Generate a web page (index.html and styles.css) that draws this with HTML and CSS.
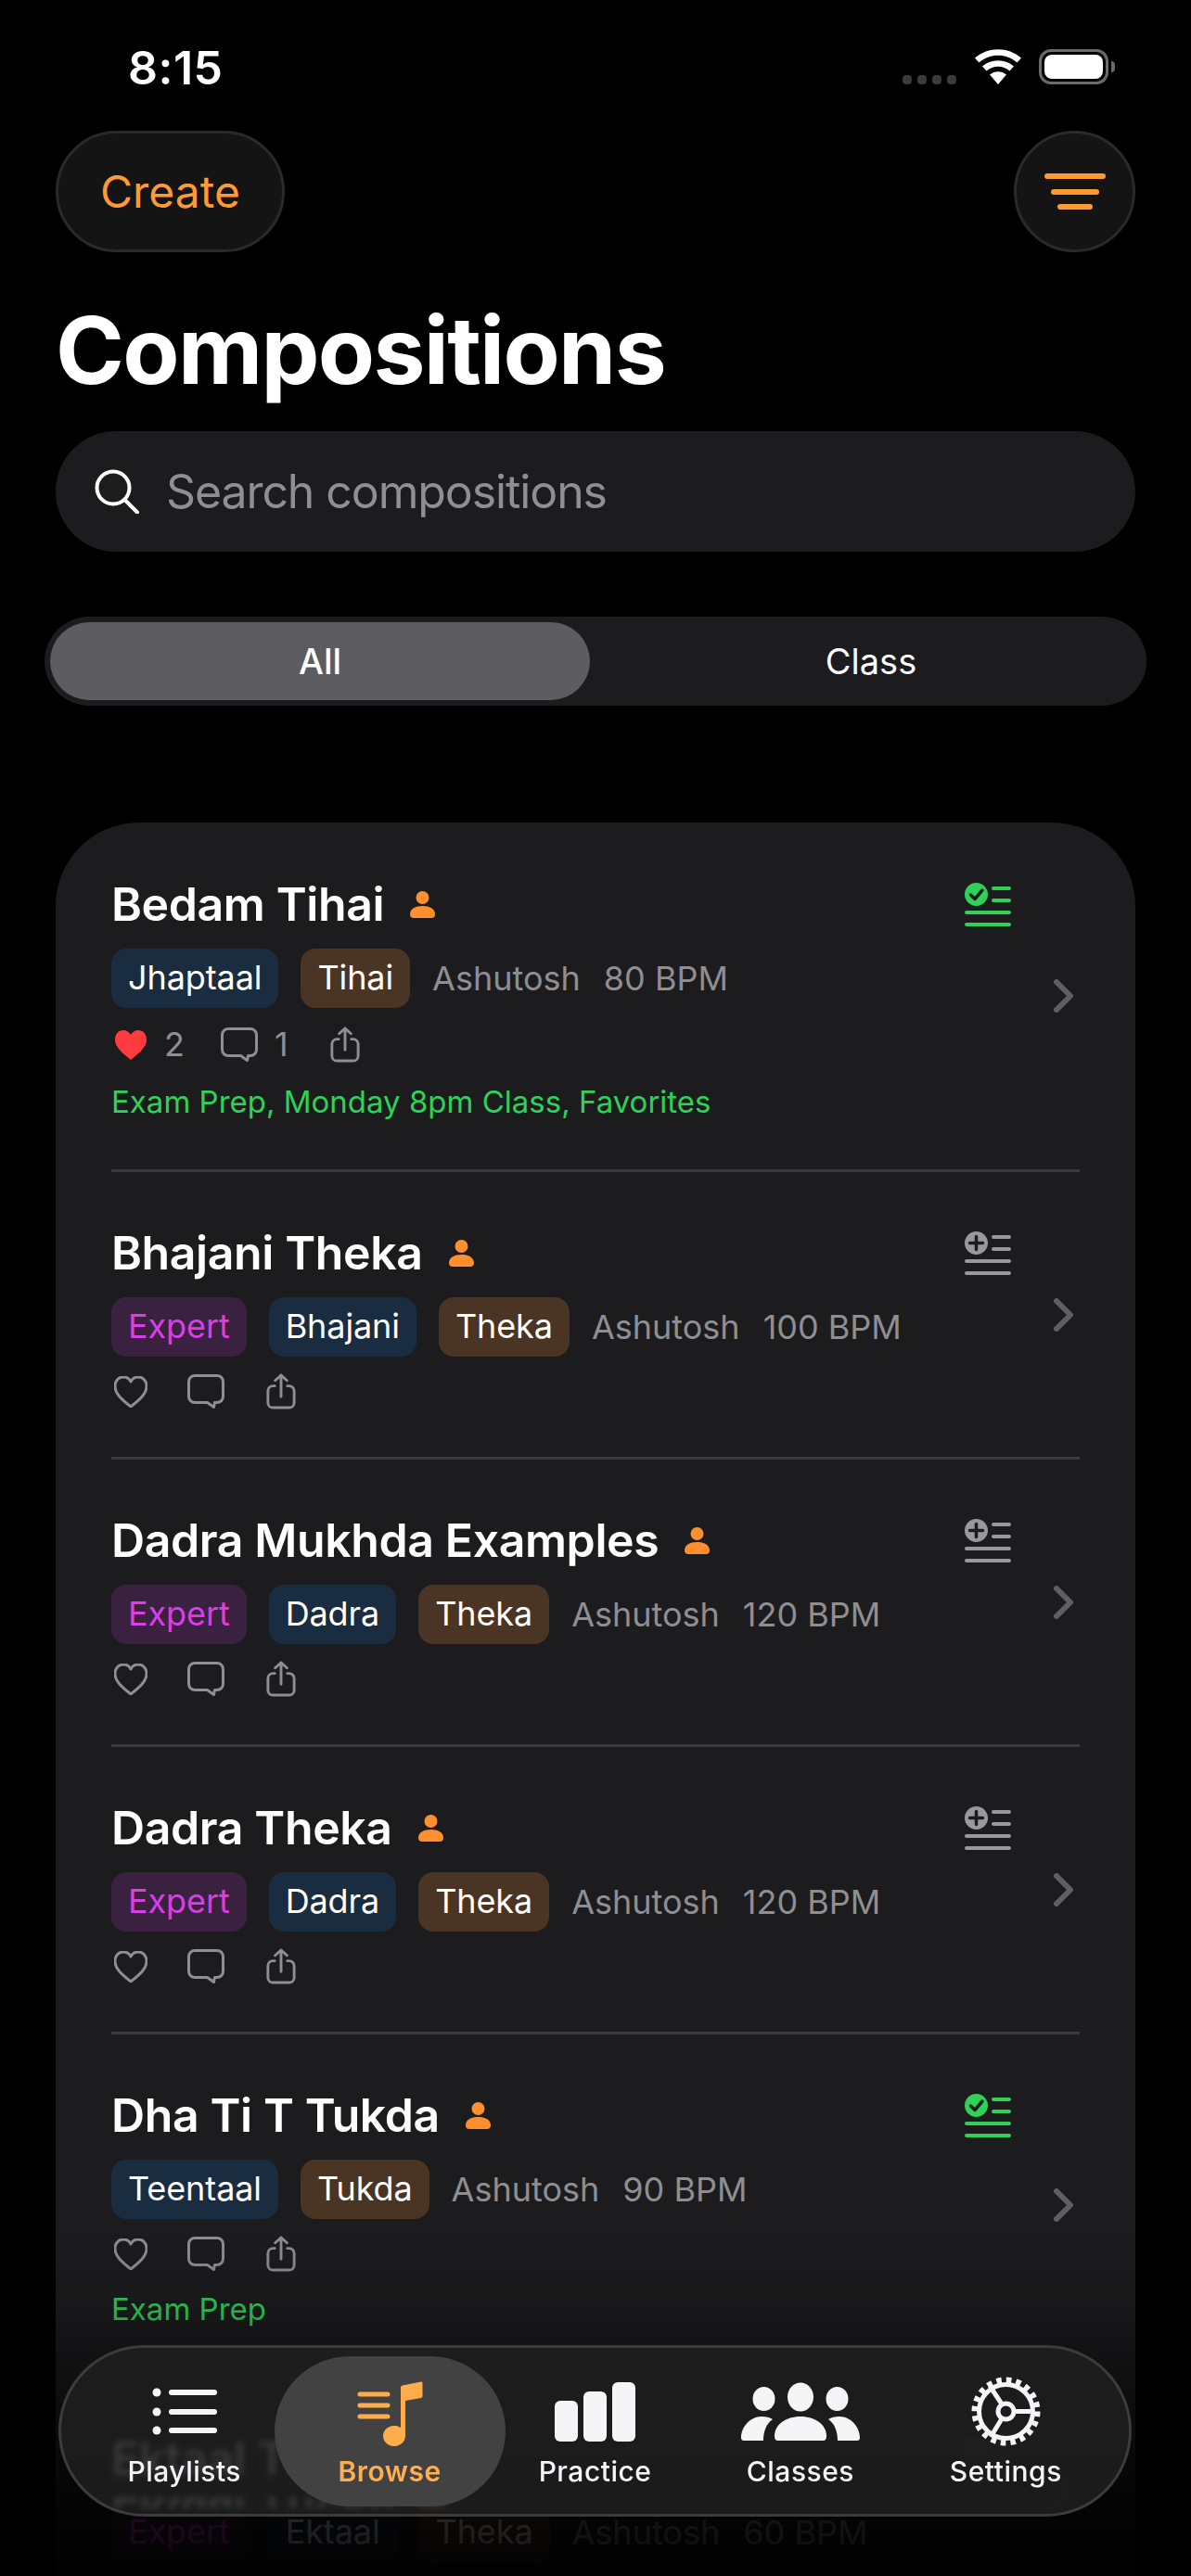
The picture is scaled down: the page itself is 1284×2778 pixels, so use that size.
FILE: index.html
```html
<!DOCTYPE html>
<html lang="en">
  <head>
    <meta charset="UTF-8" />
    <meta name="viewport" content="width=device-width, initial-scale=1.0" />
    <title>Compositions</title>
    <link rel="stylesheet" href="styles.css">
  </head>

  <body>
    <!-- shared icons -->
    <svg class="sprite">
      <symbol id="person" viewBox="0 0 27 29">
        <circle cx="13.5" cy="7" r="7" />
        <path d="M0 25c0-6 6-9 13.5-9S27 19 27 25c0 3-2 4-4 4H4c-2 0-4-1-4-4z" />
      </symbol>
      <symbol id="heart" viewBox="0 0 36 34">
        <path d="M18 33C8 25 1 19 1 11 1 5 5 1 10 1c3.500 0 6.500 2 8 5 1.500-3 4.500-5 8-5 5 0 9 4 9 10 0 8-7 14-17 22z" />
      </symbol>
      <symbol id="comment" viewBox="0 0 40 38">
        <path d="M8 1.500h24a6.500 6.500 0 0 1 6.500 6.500v16a6.500 6.500 0 0 1-6.500 6.500h-2.500l-1 5-7-5H8A6.500 6.500 0 0 1 1.500 24V8A6.500 6.500 0 0 1 8 1.500z" />
      </symbol>
      <symbol id="share" viewBox="0 0 32 40">
        <path d="M9 14H7a5.500 5.500 0 0 0-5.500 5.500v13A5.500 5.500 0 0 0 7 38h18a5.500 5.500 0 0 0 5.500-5.500v-13A5.500 5.500 0 0 0 25 14h-2" />
        <path d="M16 26V2M9.500 8 16 2l6.500 6" />
      </symbol>
      <symbol id="added" viewBox="0 0 50 48">
        <circle class="fill" cx="12.500" cy="12.500" r="12.500" />
        <path class="mark" d="M6.500 13l4.500 4.500 8-9.500" />
        <path class="lines" d="M31 6h17M31 19h17M2 32h46M2 45h46" />
      </symbol>
      <symbol id="add" viewBox="0 0 50 48">
        <circle class="fill" cx="12.500" cy="12.500" r="12.500" />
        <path class="mark" d="M12.500 5.500v14M5.500 12.500h14" />
        <path class="lines" d="M31 6h17M31 19h17M2 32h46M2 45h46" />
      </symbol>
      <symbol id="chevron" viewBox="0 0 22 36">
        <path d="M3 3l15 15L3 33" />
      </symbol>
    </svg>

    <div class="screen">
      <div class="status">
        <span class="time">8:15</span>
        <div class="status-icons">
          <div class="dots"><i></i><i></i><i></i><i></i></div>
          <svg class="wifi" viewBox="0 0 50 38">
            <path d="M25 38 16 27.500c5-4.500 13-4.500 18 0z" />
            <path d="M12.500 23.500 8 18.500c9.500-8.500 24.500-8.500 34 0l-4.500 5c-7-6.500-18-6.500-25 0z" />
            <path d="M4.500 14.500 0 9.500c14-12.500 36-12.500 50 0l-4.500 5c-11.500-10.500-29.500-10.500-41 0z" />
          </svg>
          <div class="battery"><i></i></div>
        </div>
      </div>

      <div class="top">
        <button class="create">Create</button>
        <button class="filter">
          <svg viewBox="0 0 66 40">
            <path d="M3 3h60M10 20h46M17 36h32" />
          </svg>
        </button>
      </div>

      <h1>Compositions</h1>

      <div class="search">
        <svg viewBox="0 0 48 48">
          <circle cx="20" cy="20" r="17.500" />
          <path d="M32.500 33 46 46.500" />
        </svg>
        <span>Search compositions</span>
      </div>

      <div class="segment">
        <div class="seg active">All</div>
        <div class="seg">Class</div>
      </div>

      <div class="card">
        <div class="row">
          <div class="info">
            <div class="title">Bedam Tihai <svg class="me"><use href="#person" /></svg></div>
            <div class="meta">
              <span class="tag taal">Jhaptaal</span>
              <span class="tag kind">Tihai</span>
              <span class="by">Ashutosh</span>
              <span class="by">80 BPM</span>
            </div>
            <div class="stats">
              <svg class="heart liked"><use href="#heart" /></svg>
              <span class="count">2</span>
              <svg class="comment"><use href="#comment" /></svg>
              <span class="count">1</span>
              <svg class="share"><use href="#share" /></svg>
            </div>
            <p class="lists">Exam Prep, Monday 8pm Class, Favorites</p>
          </div>
          <svg class="plist on"><use href="#added" /></svg>
          <svg class="chev"><use href="#chevron" /></svg>
        </div>

        <div class="row">
          <div class="info">
            <div class="title">Bhajani Theka <svg class="me"><use href="#person" /></svg></div>
            <div class="meta">
              <span class="tag level">Expert</span>
              <span class="tag taal">Bhajani</span>
              <span class="tag kind">Theka</span>
              <span class="by">Ashutosh</span>
              <span class="by">100 BPM</span>
            </div>
            <div class="stats">
              <svg class="heart"><use href="#heart" /></svg>
              <svg class="comment"><use href="#comment" /></svg>
              <svg class="share"><use href="#share" /></svg>
            </div>
          </div>
          <svg class="plist"><use href="#add" /></svg>
          <svg class="chev"><use href="#chevron" /></svg>
        </div>

        <div class="row">
          <div class="info">
            <div class="title">Dadra Mukhda Examples <svg class="me"><use href="#person" /></svg></div>
            <div class="meta">
              <span class="tag level">Expert</span>
              <span class="tag taal">Dadra</span>
              <span class="tag kind">Theka</span>
              <span class="by">Ashutosh</span>
              <span class="by">120 BPM</span>
            </div>
            <div class="stats">
              <svg class="heart"><use href="#heart" /></svg>
              <svg class="comment"><use href="#comment" /></svg>
              <svg class="share"><use href="#share" /></svg>
            </div>
          </div>
          <svg class="plist"><use href="#add" /></svg>
          <svg class="chev"><use href="#chevron" /></svg>
        </div>

        <div class="row">
          <div class="info">
            <div class="title">Dadra Theka <svg class="me"><use href="#person" /></svg></div>
            <div class="meta">
              <span class="tag level">Expert</span>
              <span class="tag taal">Dadra</span>
              <span class="tag kind">Theka</span>
              <span class="by">Ashutosh</span>
              <span class="by">120 BPM</span>
            </div>
            <div class="stats">
              <svg class="heart"><use href="#heart" /></svg>
              <svg class="comment"><use href="#comment" /></svg>
              <svg class="share"><use href="#share" /></svg>
            </div>
          </div>
          <svg class="plist"><use href="#add" /></svg>
          <svg class="chev"><use href="#chevron" /></svg>
        </div>

        <div class="row">
          <div class="info">
            <div class="title">Dha Ti T Tukda <svg class="me"><use href="#person" /></svg></div>
            <div class="meta">
              <span class="tag taal">Teentaal</span>
              <span class="tag kind">Tukda</span>
              <span class="by">Ashutosh</span>
              <span class="by">90 BPM</span>
            </div>
            <div class="stats">
              <svg class="heart"><use href="#heart" /></svg>
              <svg class="comment"><use href="#comment" /></svg>
              <svg class="share"><use href="#share" /></svg>
            </div>
            <p class="lists">Exam Prep</p>
          </div>
          <svg class="plist on"><use href="#added" /></svg>
          <svg class="chev"><use href="#chevron" /></svg>
        </div>

        <div class="row under-glass">
          <div class="info">
            <div class="title">Ektaal Theka <svg class="me"><use href="#person" /></svg></div>
            <div class="meta">
              <span class="tag level">Expert</span>
              <span class="tag taal">Ektaal</span>
              <span class="tag kind">Theka</span>
              <span class="by">Ashutosh</span>
              <span class="by">60 BPM</span>
            </div>
          </div>
          <svg class="plist"><use href="#add" /></svg>
          <svg class="chev"><use href="#chevron" /></svg>
        </div>
      </div>

      <div class="fade"></div>

      <nav class="tabs">
        <a class="tab">
          <svg class="ico-list" viewBox="0 0 72 75">
            <circle cx="6" cy="17" r="4.500" />
            <circle cx="6" cy="38" r="4.500" />
            <circle cx="6" cy="58" r="4.500" />
            <path d="M22 17h46M22 38h46M22 58h46" />
          </svg>
          Playlists
        </a>
        <a class="tab active">
          <svg class="ico-browse" viewBox="0 0 72 75">
            <path class="bars" d="M4 19h30M4 31h30M4 43h30" />
            <path d="M50 9.500 70 5.500c1-.2 1.500.5 1.500 1.500v14c0 1-.5 1.500-1.500 2L53 26v38a12 11 0 1 1-5-9V11.500c0-1 1-1.800 2-2z" />
          </svg>
          Browse
        </a>
        <a class="tab">
          <svg class="ico-bars" viewBox="0 0 87 75">
            <rect x="0" y="26" width="25" height="44" rx="6" />
            <rect x="31" y="16" width="25" height="54" rx="6" />
            <rect x="62" y="6" width="25" height="64" rx="6" />
          </svg>
          Practice
        </a>
        <a class="tab">
          <svg class="ico-people" viewBox="0 0 128 75">
            <ellipse cx="24.500" cy="24" rx="12" ry="13" />
            <ellipse cx="64" cy="22" rx="14" ry="15.500" />
            <ellipse cx="103.500" cy="24" rx="12" ry="13" />
            <path d="M40 69c-3 0-4-2-4-5C36 52 48 43 64 43s28 9 28 21c0 3-1 5-4 5z" />
            <path d="M3 69c-2 0-3-1-3-3C0 54 10 43 22 43c5 0 9 1 12 3-7 5-10 13-10 23z" />
            <path d="M125 69c2 0 3-1 3-3 0-12-10-23-22-23-5 0-9 1-12 3 7 5 10 13 10 23z" />
          </svg>
          Classes
        </a>
        <a class="tab">
          <svg class="ico-gear" viewBox="0 0 75 75">
            <circle class="teeth" cx="37.500" cy="37.500" r="33.500" />
            <circle cx="37.500" cy="37.500" r="29" />
            <circle cx="37.500" cy="37.500" r="8.500" />
            <path d="M46 37.500h21M33.300 30 20 10M33.300 45 21 65" />
          </svg>
          Settings
        </a>
      </nav>
    </div>
  </body>
</html>
```

FILE: styles.css
```css
* {
  box-sizing: border-box;
}

html,
body {
  margin: 0;
  height: 2778px;
  overflow: hidden;
  background: #000;
}

body {
  font-family: "Inter", "Liberation Sans", sans-serif;
  color: #fff;
}

.sprite {
  display: none;
}

.screen {
  position: relative;
  height: 2778px;
  padding: 0 60px;
  overflow: hidden;
}

/* status bar */
.status {
  height: 141px;
  display: flex;
  justify-content: space-between;
  padding-top: 46px;
}

.time {
  margin-left: 78px;
  font-size: 50px;
  line-height: 54px;
  font-weight: 600;
  letter-spacing: 0.5px;
}

.status-icons {
  display: flex;
  margin-right: 29px;
  align-items: flex-start;
  padding-top: 7px;
}

.dots {
  display: flex;
  gap: 6px;
  margin-top: 28px;
  margin-right: 20px;
}

.dots i {
  width: 10px;
  height: 10px;
  border-radius: 4px;
  background: #3a3a3a;
}

.wifi {
  width: 50px;
  height: 38px;
  margin-right: 19px;
  fill: #fff;
}

.battery {
  position: relative;
  width: 75px;
  height: 38px;
  padding: 3px;
  border: 3px solid #6b6b6b;
  border-radius: 13px;
}

.battery i {
  display: block;
  height: 100%;
  background: #fff;
  border-radius: 8px;
}

.battery::after {
  content: "";
  position: absolute;
  right: -10px;
  top: 10px;
  width: 4px;
  height: 12px;
  background: #6b6b6b;
  border-radius: 0 6px 6px 0;
}

/* top buttons */
.top {
  display: flex;
  justify-content: space-between;
}

.top button {
  height: 131px;
  background: #141414;
  border: 3px solid #2a2a2a;
  border-radius: 66px;
  font-family: inherit;
  padding: 0;
}

.create {
  width: 247px;
  color: #ff9a33;
  font-size: 48px;
}

.filter {
  width: 131px;
  display: flex;
  align-items: center;
  justify-content: center;
}

.filter svg {
  width: 66px;
  height: 40px;
  fill: none;
  stroke: #ff9a33;
  stroke-width: 6px;
  stroke-linecap: round;
}

h1 {
  margin: 46px 0 27px;
  font-size: 100px;
  line-height: 120px;
  font-weight: 700;
  letter-spacing: -1.7px;
}

/* search */
.search {
  height: 130px;
  background: #1c1c1e;
  border-radius: 65px;
  display: flex;
  align-items: center;
  padding-left: 42px;
  gap: 29px;
  color: #8e8e93;
  font-size: 50px;
  letter-spacing: -1.1px;
}

.search svg {
  width: 48px;
  height: 48px;
  fill: none;
  stroke: #fff;
  stroke-width: 4px;
  stroke-linecap: round;
}

/* all / class */
.segment {
  margin: 70px -12px 0;
  height: 96px;
  padding: 6px;
  background: #1c1c1e;
  border-radius: 48px;
  display: flex;
}

.seg {
  width: 582px;
  display: flex;
  align-items: center;
  justify-content: center;
  font-size: 38px;
  border-radius: 42px;
}

.seg + .seg {
  flex: 1;
  padding-left: 12px;
}

.seg.active {
  background: #5c5c61;
  font-weight: 500;
}

/* list */
.card {
  margin-top: 126px;
  padding: 0 60px;
  background: #1c1c1e;
  border-radius: 90px 90px 0 0;
}

.row {
  display: flex;
  padding: 57px 0 51px;
  border-top: 3px solid #3a3a3c;
}

.row:first-child {
  border-top: 0;
  padding: 58px 0 53px;
}

.info {
  flex: 1;
}

.title {
  display: flex;
  align-items: center;
  gap: 28px;
  height: 60px;
  font-size: 50px;
  font-weight: 600;
  letter-spacing: -0.4px;
}

.me {
  width: 27px;
  height: 29px;
  fill: #ff8f2e;
}

.meta {
  display: flex;
  align-items: center;
  margin-top: 18px;
  gap: 24px;
  font-size: 36px;
}

.tag {
  height: 64px;
  line-height: 62px;
  padding: 0 18px;
  border-radius: 16px;
  letter-spacing: -0.1px;
}

.tag.taal {
  background: #1a2c40;
}

.tag.kind {
  background: #4a3423;
}

.tag.level {
  background: #3a2140;
  color: #d93ee8;
}

.by {
  color: #8e8e93;
  margin-right: 1px;
}

.stats {
  display: flex;
  align-items: center;
  margin-top: 18px;
  color: #8e8e93;
  font-size: 36px;
  line-height: 43px;
  padding-left: 3px;
}

.stats svg {
  fill: none;
  stroke: #8e8e93;
  stroke-width: 3px;
  stroke-linecap: round;
  stroke-linejoin: round;
}

.heart {
  width: 36px;
  height: 34px;
}

.stats .liked {
  fill: #ff3b40;
  stroke: none;
}

.comment {
  width: 40px;
  height: 38px;
  margin-left: 43px;
}

.share {
  width: 32px;
  height: 39px;
  margin-left: 45px;
}

.count {
  margin-left: 18px;
  width: 20px;
}

.count + .comment {
  margin-left: 41px;
}

.count + .share {
  margin-left: 40px;
}

.lists {
  margin: 20px 0 0;
  line-height: 40px;
  font-size: 33px;
  color: #30d158;
}

.plist {
  width: 50px;
  height: 48px;
  margin-top: 7px;
  --on: #98989d;
}

.plist.on {
  --on: #30d158;
}

.fill {
  fill: var(--on);
}

.mark {
  fill: none;
  stroke: #1c1c1e;
  stroke-width: 3.5px;
  stroke-linecap: round;
  stroke-linejoin: round;
}

.lines {
  fill: none;
  stroke: var(--on);
  stroke-width: 4px;
  stroke-linecap: round;
}

.chev {
  width: 22px;
  height: 36px;
  margin: 0 6px 6px 46px;
  align-self: center;
  fill: none;
  stroke: #5f5f63;
  stroke-width: 6px;
  stroke-linecap: round;
  stroke-linejoin: round;
}

/* list fades out behind the tab bar */
.fade {
  position: absolute;
  left: 0;
  right: 0;
  bottom: 0;
  height: 378px;
  background: linear-gradient(
    to bottom,
    rgba(0, 0, 0, 0),
    rgba(0, 0, 0, 0.15) 24%,
    rgba(0, 0, 0, 0.35) 35%,
    rgba(0, 0, 0, 0.85) 80%,
    rgba(0, 0, 0, 0.93)
  );
}

/* the title of the last row stays bright enough to show through the glass */
.under-glass .title {
  position: relative;
  z-index: 1;
  -webkit-box-reflect: below 0 linear-gradient(to bottom, transparent 60%, #000 60%);
}

/* tab bar */
.tabs {
  position: absolute;
  z-index: 2;
  left: 63px;
  bottom: 64px;
  width: 1157px;
  height: 185px;
  padding: 0 22px;
  display: flex;
  border: 3px solid #3c3c3c;
  border-radius: 93px;
  background: rgba(30, 30, 30, 0.89);
  backdrop-filter: blur(3px);
}

.tab {
  position: relative;
  isolation: isolate;
  width: 222px;
  display: flex;
  flex-direction: column;
  align-items: center;
  padding-top: 31px;
  gap: 9px;
  font-size: 30px;
  line-height: 36px;
  font-weight: 500;
  letter-spacing: 0.5px;
  color: #f5f5f7;
}

.tab svg {
  height: 75px;
  fill: #f5f5f7;
}

.tab.active {
  color: #ffad4d;
  font-weight: 600;
}

.tab.active::before {
  content: "";
  position: absolute;
  z-index: -1;
  left: -13px;
  right: -14px;
  top: 9px;
  height: 162px;
  border-radius: 81px;
  background: #424242;
}

.tab.active svg {
  fill: #ffad4d;
}

.ico-list {
  width: 72px;
}

.ico-list path {
  fill: none;
  stroke: #f5f5f7;
  stroke-width: 6px;
  stroke-linecap: round;
}

.ico-browse {
  width: 72px;
}

.ico-browse .bars {
  fill: none;
  stroke: #ffad4d;
  stroke-width: 5px;
  stroke-linecap: round;
}

.ico-bars {
  width: 87px;
}

.ico-people {
  width: 128px;
}

.ico-gear {
  width: 75px;
}

.ico-gear circle,
.ico-gear path {
  fill: none;
  stroke: #f5f5f7;
  stroke-width: 5px;
}

.ico-gear .teeth {
  stroke-width: 7px;
  stroke-dasharray: 5.500 5.030;
}
```
